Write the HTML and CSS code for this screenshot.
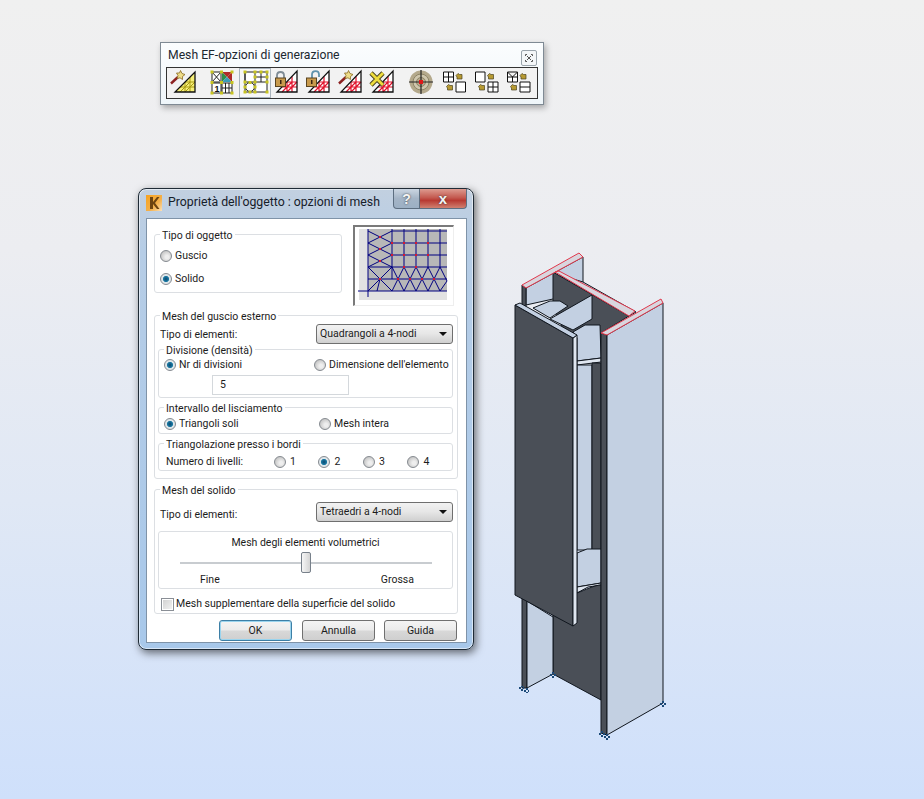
FILE: index.html
```html
<!DOCTYPE html>
<html lang="en">
<head>
  <meta charset="UTF-8" />
  <title>Mesh EF</title>
  <link rel="stylesheet" href="styles.css">
</head>
<body>
  <svg class="defs" width="0" height="0">
    <defs>
      <linearGradient id="logo-bg" x1="0" y1="0" x2="1" y2="1">
        <stop offset="0" stop-color="#f6a21e"/>
        <stop offset=".6" stop-color="#f4b04a"/>
        <stop offset="1" stop-color="#fbe0b8"/>
      </linearGradient>
      <g id="tri-yellow">
        <path d="M28 4V24H8Z" fill="#f6ef7a"/>
        <path d="M18 14V24M23 9V24M13 19H28M18 14H28M18 24L28 14M13 24L23 14" stroke="#a89a10" fill="none"/>
        <path d="M28 4V24H8Z" stroke="#111" stroke-width="1.300" fill="none"/>
      </g>
      <g id="tri-red">
        <path d="M26 3V24H6Z" fill="#fff"/>
        <path d="M16 14V24M21 8.500V24M11 19H26M16 14H26M16 24L26 14M11 24L21 14" stroke="#e0102a" stroke-width="1.200" fill="none"/>
        <path d="M26 3V24H6Z" stroke="#111" stroke-width="1.300" fill="none"/>
      </g>
      <g id="wand">
        <path d="M4 15.500L11 9" stroke="#8c2020" stroke-width="2.400"/>
        <path d="M13.500 2.500L15 5.500L18 6.500L15.500 8.500L15.500 11.500L13 9.800L10 10.500L11 7.500L9.500 5L12.500 5Z" fill="#eedd88" stroke="#8a6a20" stroke-width=".8"/>
      </g>
      <g id="lock">
        <path d="M6 10V7.500C6 2.800 13 2.800 13 7.500V10" stroke="#7f8c96" stroke-width="1.800" fill="none"/>
        <rect x="4.500" y="10" width="10" height="8.500" fill="#c89a4c" stroke="#5a4420"/>
        <rect x="9" y="12" width="1.500" height="4" fill="#3a2410"/>
      </g>
      <g id="unlock">
        <path d="M9 10V6.500C9 2 16 2 16 6.500V9" stroke="#5f93ad" stroke-width="1.800" fill="none"/>
        <rect x="3.500" y="10" width="10" height="8.500" fill="#c89a4c" stroke="#5a4420"/>
        <rect x="8" y="12" width="1.500" height="4" fill="#3a2410"/>
      </g>
      <path id="gold" d="M-3 -1L-1 -3L.5 -2H3V2.500H-2V.5Z" fill="#b79a32" stroke="#4b4420" stroke-width=".7"/>
      <g id="dot"><rect x="-1.500" y="-1.500" width="3" height="3" fill="#c8c420"/></g>
    </defs>
  </svg>

  <section class="toolwin">
    <div class="toolwin-head">
      <span class="toolwin-title">Mesh EF-opzioni di generazione</span>
      <span class="toolwin-close">
        <svg width="8" height="8" viewBox="0 0 8 8"><path d="M2 2L6 6M6 2L2 6M2 .5H.5V2M6 .5H7.500V2M2 7.500H.5V6M6 7.500H7.500V6" stroke="#555" fill="none"/></svg>
      </span>
    </div>
    <div class="toolbar">
      <span class="tool">
        <svg viewBox="0 0 32 29"><use href="#tri-yellow"/><use href="#wand"/></svg>
      </span>
      <span class="tool tool-sep">
        <svg viewBox="0 0 32 29">
          <path d="M5 4H14V14H5ZM5 4L14 14M14 4L5 14" stroke="#222" fill="#fff"/>
          <path d="M15 4H25L20 9Z" fill="#b02a28"/><path d="M15 4V14L20 9Z" fill="#2f8f4a"/><path d="M25 4V14L20 9Z" fill="#b02a28"/><path d="M15 14H25L20 9Z" fill="#3b9db8"/>
          <path d="M5 15H14V25H5Z" stroke="#222" fill="#fff"/>
          <path d="M15 15H25V25H15ZM18.500 15V25M22 15V25M15 20H25" stroke="#222" fill="#fff"/>
          <text class="one" x="7.500" y="24">1</text>
          <use href="#dot" x="5" y="4"/><use href="#dot" x="14.500" y="4"/><use href="#dot" x="25" y="4"/><use href="#dot" x="5" y="14.500"/><use href="#dot" x="14.500" y="14.500"/><use href="#dot" x="25" y="14.500"/><use href="#dot" x="5" y="25"/><use href="#dot" x="14.500" y="25"/><use href="#dot" x="25" y="25"/>
        </svg>
      </span>
      <span class="tool tool-on">
        <svg viewBox="0 0 32 29">
          <path d="M6 4H28V14H6ZM6 24V4M16 4V24M6 24H28V14M22 4V14M16 9H28" stroke="#222" fill="#fff"/>
          <circle cx="11" cy="19" r="4.500" fill="#fff" stroke="#222"/>
          <use href="#dot" x="6" y="4"/><use href="#dot" x="16" y="4"/><use href="#dot" x="22" y="4"/><use href="#dot" x="28" y="4"/><use href="#dot" x="16" y="9"/><use href="#dot" x="28" y="9"/><use href="#dot" x="6" y="14"/><use href="#dot" x="16" y="14"/><use href="#dot" x="28" y="14"/><use href="#dot" x="11" y="14.500"/><use href="#dot" x="6" y="19"/><use href="#dot" x="16" y="19"/><use href="#dot" x="6" y="24"/><use href="#dot" x="11" y="24"/><use href="#dot" x="16" y="24"/><use href="#dot" x="28" y="24"/>
        </svg>
      </span>
      <span class="tool"><svg viewBox="0 0 32 29"><use href="#tri-red"/><use href="#lock"/></svg></span>
      <span class="tool"><svg viewBox="0 0 32 29"><use href="#tri-red"/><use href="#unlock"/></svg></span>
      <span class="tool"><svg viewBox="0 0 32 29"><use href="#tri-red"/><use href="#wand"/></svg></span>
      <span class="tool">
        <svg viewBox="0 0 32 29"><use href="#tri-red"/><path d="M4 5L16 17M16 5L4 17" stroke="#4b4420" stroke-width="4.600"/><path d="M4 5L16 17M16 5L4 17" stroke="#eedc3c" stroke-width="2.800"/></svg>
      </span>
      <span class="tool tool-sep2">
        <svg viewBox="0 0 32 29">
          <circle cx="15" cy="14" r="11.500" fill="#b4a98c"/>
          <circle cx="15" cy="14" r="8" fill="#cfc7ae" stroke="#8e8466"/>
          <circle cx="15" cy="14" r="4.500" fill="#b4a98c" stroke="#8e8466"/>
          <path d="M3 14H27M15 2V26" stroke="#222" stroke-width="1.200"/>
          <rect x="13" y="12" width="4" height="4" fill="#e01818"/>
        </svg>
      </span>
      <span class="tool">
        <svg viewBox="0 0 32 29"><path d="M5.500 4H15.500V14H5.500ZM10.500 4V14M5.500 9H15.500" stroke="#111" fill="#fff"/><path d="M18 14H27.500V24H18Z" stroke="#111" fill="#fff"/><use href="#gold" x="21" y="8.500"/><use href="#gold" x="11.500" y="19.500"/></svg>
      </span>
      <span class="tool">
        <svg viewBox="0 0 32 29"><path d="M5.500 4H15V14H5.500Z" stroke="#111" fill="#fff"/><path d="M18 14H28V24H18ZM23 14V24M18 19H28" stroke="#111" fill="#fff"/><use href="#gold" x="20.500" y="8.500"/><use href="#gold" x="11.500" y="19.500"/></svg>
      </span>
      <span class="tool">
        <svg viewBox="0 0 32 29"><path d="M5.500 4H15.500V14H5.500ZM5.500 9H15.500M10.500 9V14M5.500 4L10.500 9L15.500 4" stroke="#111" fill="#fff"/><path d="M18 14H28V24H18ZM18 19H28" stroke="#111" fill="#fff"/><use href="#gold" x="21" y="8.500"/><use href="#gold" x="11.500" y="19.500"/></svg>
      </span>
    </div>
  </section>

  <section class="dialog">
    <header class="dialog-head">
      <svg class="dialog-logo" width="16" height="16" viewBox="0 0 16 16">
        <rect width="16" height="16" fill="url(#logo-bg)"/>
        <path d="M4 2H7V7L11 2H13.500L9 8L13.500 14H11L7 9V14H4Z" fill="#6e4410"/>
      </svg>
      <span class="dialog-title">Proprietà dell'oggetto : opzioni di mesh</span>
      <span class="btn-help">?</span>
      <span class="btn-close">x</span>
    </header>

    <div class="client">
      <div class="top-row">
        <div class="group group-type">
          <div class="legend">Tipo di oggetto</div>
          <label class="opt opt-type"><i class="radio"></i>Guscio</label>
          <label class="opt opt-type2"><i class="radio radio-on"></i>Solido</label>
        </div>
        <div class="preview">
          <svg width="99" height="81" viewBox="0 0 99 81">
            <rect x="4" y="4" width="88" height="71" fill="#e2e2e2"/>
            <rect x="13" y="4" width="79" height="62" fill="#b8b8b8"/>
            <path d="M13 4V72M37 4V54M49 4V42M61 4V42M73 4V42M85 4V42M37 6H92M37 18H92M37 30H92M13 42H92M13 54H92M3 66H92" stroke="#000080" fill="none"/>
            <path d="M13 6L37 18L13 30L37 42M37 6L13 18L37 30L13 42M13 42L25 54L37 42M25 54L22 66M25 54L13 66M25 54L37 66M37 42L49 66M49 42L37 66M49 42L61 66M61 42L49 66M61 42L73 66M73 42L61 66M73 42L85 66M85 42L73 66M85 42L92 56M92 56L85 66" stroke="#000080" fill="none"/>
            <g fill="#d81830"><rect x="24" y="11" width="2" height="2"/><rect x="24" y="23" width="2" height="2"/><rect x="24" y="35" width="2" height="2"/><rect x="36" y="17" width="2" height="2"/><rect x="48" y="17" width="2" height="2"/><rect x="60" y="17" width="2" height="2"/><rect x="72" y="17" width="2" height="2"/><rect x="36" y="29" width="2" height="2"/><rect x="48" y="29" width="2" height="2"/><rect x="60" y="29" width="2" height="2"/><rect x="72" y="29" width="2" height="2"/><rect x="48" y="41" width="2" height="2"/><rect x="60" y="41" width="2" height="2"/><rect x="24" y="53" width="2" height="2"/><rect x="42" y="53" width="2" height="2"/><rect x="54" y="53" width="2" height="2"/><rect x="66" y="53" width="2" height="2"/><rect x="78" y="53" width="2" height="2"/></g>
          </svg>
        </div>
      </div>

      <div class="group group-shell">
        <div class="legend">Mesh del guscio esterno</div>
        <div class="field-row">
          <span>Tipo di elementi:</span>
          <span class="combo">Quadrangoli a 4-nodi</span>
        </div>
        <div class="group sub sub-div">
          <div class="legend">Divisione (densità)</div>
          <div class="row-div">
            <label class="opt"><i class="radio radio-on"></i>Nr di divisioni</label>
            <label class="opt"><i class="radio"></i>Dimensione dell'elemento</label>
          </div>
          <div class="num-input">5</div>
        </div>
        <div class="group sub sub-smooth">
          <div class="legend">Intervallo del lisciamento</div>
          <div class="row-smooth">
            <label class="opt"><i class="radio radio-on"></i>Triangoli soli</label>
            <label class="opt"><i class="radio"></i>Mesh intera</label>
          </div>
        </div>
        <div class="group sub sub-levels">
          <div class="legend">Triangolazione presso i bordi</div>
          <div class="row-levels">
            <span class="levels-label">Numero di livelli:</span>
            <label class="opt"><i class="radio"></i>1</label>
            <label class="opt"><i class="radio radio-on"></i>2</label>
            <label class="opt"><i class="radio"></i>3</label>
            <label class="opt"><i class="radio"></i>4</label>
          </div>
        </div>
      </div>

      <div class="group group-solid">
        <div class="legend">Mesh del solido</div>
        <div class="field-row field-row-solid">
          <span>Tipo di elementi:</span>
          <span class="combo">Tetraedri a 4-nodi</span>
        </div>
        <div class="group sub sub-vol">
          <div class="vol-title">Mesh degli elementi volumetrici</div>
          <div class="slider"><i class="thumb"></i></div>
          <div class="vol-ends"><span>Fine</span><span>Grossa</span></div>
        </div>
        <label class="opt opt-check"><i class="check"></i>Mesh supplementare della superficie del solido</label>
      </div>

      <div class="buttons">
        <span class="btn btn-default">OK</span>
        <span class="btn">Annulla</span>
        <span class="btn btn-last">Guida</span>
      </div>
    </div>
  </section>

  <svg class="model" width="924" height="799" viewBox="0 0 924 799">
    <g stroke="#10161e" stroke-linejoin="round">
      <!-- back flange and web, top -->
      <path d="M583 257V282L553 299L526 305V288Z" fill="#c3d0e2"/>
      <path d="M522 285L526 288V308H522Z" fill="#4a4f57"/>
      <path d="M553 272L629 316L601 333L601 360H577L553 306Z" fill="#4a4f57"/>
      <path d="M583 282L636 312L629 316L560 275Z" fill="#c3d0e2"/>
      <!-- stiffener plates at the top -->
      <path d="M533 308L550 301H560L568 306L550 318Z" fill="#c3d0e2"/>
      <path d="M550 319L592 295V319L573 330Z" fill="#c3d0e2"/>
      <path d="M573 332L585 325H600L601 358L577 361V338Z" fill="#c3d0e2"/>
      <path d="M577 361L601 358V362L577 365Z" fill="#dfe6f0"/>
      <!-- inner web -->
      <path d="M577 365H592V550H577Z" fill="#c3d0e2"/>
      <path d="M592 363H601V550H592Z" fill="#4a4f57"/>
      <path d="M577 553L587 549H601V583L577 587Z" fill="#c3d0e2"/>
      <path d="M577 587L601 583V585L588 587L577 593Z" fill="#dfe6f0"/>
      <path d="M577 593C585 590 595 585 601 585V700L553 674V610Z" fill="#4a4f57"/>
      <!-- back flange, bottom -->
      <path d="M522 598H527V688L522 688Z" fill="#4a4f57"/>
      <path d="M527 601L553 617V674L527 688Z" fill="#c3d0e2"/>
      <!-- right flange -->
      <path d="M601 333L607 335V735L601 733Z" fill="#4a4f57"/>
      <path d="M607 335L663 303V703L607 735Z" fill="#c3d0e2"/>
      <!-- front flange -->
      <path d="M515 305V595L573 626V338Z" fill="#4a4f57"/>
      <path d="M573 338L577 335V623L573 626Z" fill="#dfe6f0"/>
      <path d="M515 305L520 303L577 335L573 338Z" fill="#c3d0e2"/>
    </g>
    <g stroke="#e0384c" stroke-linejoin="round" fill="#d9d6de">
      <path d="M522 285L579 253L583 257L526 288Z"/>
      <path d="M601 333L661 299L663 303L607 335Z"/>
      <path d="M555 272L559 271L635 311L629 316Z"/>
    </g>
    <g fill="#1c4a78">
      <path d="M519 687H524V689H519ZM521 686V691H523V686ZM524 690H529V692H524ZM526 688V693H528V688Z"/>
      <path d="M550 674H556V676H550ZM552 672V678H554V672Z"/>
      <path d="M599 733H605V735H599ZM601 731V737H603V731ZM604 736H610V738H604ZM606 734V740H608V734Z"/>
      <path d="M660 703H666V705H660ZM662 701V707H664V701Z"/>
    </g>
  </svg>
</body>
</html>
```

FILE: styles.css
```css
* {
  box-sizing: border-box;
}
html, body {
  height: 100%;
}
body {
  margin: 0;
  overflow: hidden;
  position: relative;
  background: linear-gradient(#f0f0f0 0, #ecedf1 250px, #e0e8f5 500px, #cfe0fb 799px);
  color: #1c1c1c;
  font-family: Roboto, "Noto Sans", sans-serif;
  font-size: 10.500px;
}
.defs {
  position: absolute;
}

/* floating toolbar window */
.toolwin {
  position: absolute;
  left: 160px;
  top: 42px;
  width: 384px;
  height: 63px;
  padding: 0 5px;
  background: linear-gradient(#fbfdfe, #eff6fa);
  border: 1px solid #7f8a94;
  box-shadow: 2px 3px 6px rgba(0, 0, 0, 0.3);
}
.toolwin-head {
  display: flex;
  justify-content: space-between;
  align-items: center;
  height: 24px;
  padding: 0 1px 0 2px;
}
.toolwin-title {
  margin-top: -1px;
  font-size: 12.200px;
  color: #1c2830;
}
.toolwin-close {
  display: flex;
  align-items: center;
  justify-content: center;
  width: 16px;
  height: 16px;
  margin-top: 5px;
  background: #f3f6f8;
  border: 1px solid #9aa4ac;
  border-radius: 2px;
}
.toolbar {
  display: flex;
  width: 372px;
  height: 32px;
  background: #f2f2f2;
  border: 1px solid #333;
}
.tool {
  width: 32px;
  height: 30px;
}
.tool svg {
  display: block;
  width: 32px;
  height: 29px;
}
.tool-sep {
  margin-left: 8px;
}
.tool-sep2 {
  margin-left: 7px;
}
.tool-on {
  background: #f7f7f7;
  box-shadow: inset 0 0 0 1px #aab4bc;
}

/* dialog window */
.dialog {
  position: absolute;
  left: 138px;
  top: 188px;
  width: 336px;
  height: 462px;
  padding: 0 6px 7px 7px;
  background: linear-gradient(#c2d0e0 0, #b6cde6 60px, #a8c8ea 100%);
  border: 1px solid #1f2b36;
  border-radius: 8px;
  box-shadow: 2px 3px 9px rgba(0, 0, 0, 0.55), inset 0 0 0 1px rgba(255, 255, 255, 0.55);
}
.dialog-head {
  display: flex;
  height: 29px;
}
.dialog-logo {
  margin: 6px 6px 0 0;
}
.dialog-title {
  flex: 1;
  margin-top: 6px;
  font-size: 12.300px;
  white-space: nowrap;
  color: #16202a;
}
.btn-help, .btn-close {
  display: flex;
  align-items: center;
  justify-content: center;
  height: 20px;
  border: 1px solid #5d6e80;
  border-top: 0;
  color: #f4f4f4;
  font-family: "Liberation Sans", sans-serif;
  font-weight: bold;
  text-shadow: 0 0 2px #333;
}
.btn-help {
  width: 27px;
  font-size: 14px;
  background: linear-gradient(#cbd6e2, #a4b4c6 50%, #9cb0c4);
  border-radius: 0 0 0 4px;
}
.btn-close {
  width: 47px;
  font-size: 15px;
  background: linear-gradient(#dd9b90, #c45a50 45%, #b83a32 60%, #d08070);
  border-left: 0;
  border-radius: 0 0 4px 0;
}
.client {
  height: 425px;
  padding: 6px 8px 0 7px;
  background: #fff;
  border: 1px solid #7f93a8;
}

/* groups */
.group {
  border: 1px solid #dcdfe3;
  border-radius: 3px;
}
.legend {
  width: fit-content;
  margin: -6px 0 -2px 5px;
  padding: 0 2px;
  background: #fff;
  line-height: 14px;
}
.group-shell > .legend, .group-solid > .legend {
  margin-left: 2px;
}
.top-row {
  display: flex;
  gap: 11px;
  height: 81px;
}
.group-type {
  width: 188px;
  height: 59px;
  margin-top: 9px;
}
.preview {
  width: 101px;
  height: 81px;
  background: #fff;
  border: 1px solid #eee;
  border-top: 2px solid #7a7a7a;
  border-left: 2px solid #7a7a7a;
}
.preview svg {
  display: block;
  margin-top: -2px;
}
.opt {
  display: flex;
  align-items: center;
  gap: 3px;
  line-height: 14px;
  white-space: nowrap;
}
.opt-type {
  margin: 8px 0 0 5px;
}
.opt-type2 {
  margin: 9px 0 0 5px;
}
.radio {
  width: 12px;
  height: 12px;
  flex: none;
  border: 1px solid #858a90;
  border-radius: 50%;
  background: radial-gradient(circle at 60% 60%, #eeeeee 20%, #bdbdbd 85%);
}
.radio-on {
  background: radial-gradient(circle, #0c4870 0, #1b7aa4 38%, #dfe6ea 50%);
}
.check {
  width: 13px;
  height: 13px;
  flex: none;
  border: 1px solid #8a8f96;
  background: linear-gradient(135deg, #cfcfcf, #f4f4f4);
  box-shadow: inset 0 0 0 1px #fff;
}

.group-shell {
  height: 164px;
  margin-top: 9px;
  padding: 0 4px 0 3px;
}
.field-row {
  display: flex;
  justify-content: space-between;
  align-items: center;
  height: 20px;
  margin-top: 2px;
  padding-left: 2px;
}
.field-row span:first-child {
  padding-top: 1px;
}
.combo {
  position: relative;
  width: 137px;
  height: 20px;
  padding: 2px 3px;
  background: linear-gradient(#f2f2f2 0, #e6e6e6 50%, #cfcfcf 100%);
  border: 1px solid #6f6f6f;
  border-radius: 3px;
}
.combo::after {
  content: "";
  position: absolute;
  right: 5px;
  top: 7px;
  border: 4px solid transparent;
  border-top: 4px solid #111;
  border-bottom: 0;
}
.sub-div {
  height: 49px;
  margin-top: 5px;
}
.row-div {
  display: flex;
  margin: 2px 0 0 5px;
}
.row-div .opt:first-child {
  width: 150px;
}
.num-input {
  width: 137px;
  height: 20px;
  margin: 3px 0 0 53px;
  padding: 2px 7px;
  border: 1px solid #d4d8dc;
}
.sub-smooth {
  height: 27px;
  margin-top: 9px;
}
.row-smooth {
  display: flex;
  margin: 3px 0 0 5px;
}
.row-smooth .opt:first-child {
  width: 155px;
}
.sub-levels {
  height: 28px;
  margin-top: 9px;
}
.row-levels {
  display: flex;
  margin: 3px 0 0 7px;
}
.levels-label {
  width: 109px;
  padding-top: 1px;
  line-height: 16px;
}
.row-levels .opt {
  width: 45px;
  gap: 4px;
}

.group-solid {
  height: 125px;
  margin-top: 10px;
  padding: 0 4px 0 3px;
}
.field-row-solid {
  margin-top: 6px;
}
.field-row-solid span:first-child {
  padding-top: 4px;
}
.sub-vol {
  height: 58px;
  margin-top: 9px;
  padding-top: 3px;
}
.vol-title {
  text-align: center;
  line-height: 15px;
}
.slider {
  position: relative;
  height: 2px;
  margin: 12px 20px 0 21px;
  background: #c8ccd0;
}
.thumb {
  position: absolute;
  left: 121px;
  top: -10px;
  width: 10px;
  height: 21px;
  background: linear-gradient(90deg, #f6f6f6, #d4d4d4);
  border: 1px solid #77808a;
  border-radius: 2px;
}
.vol-ends {
  display: flex;
  justify-content: space-between;
  margin-top: 9px;
  padding: 0 38px 0 41px;
  line-height: 14px;
}
.opt-check {
  gap: 2px;
  margin: 8px 0 0 3px;
}

.buttons {
  display: flex;
  justify-content: flex-end;
  gap: 10px;
  margin: 6px 1px 0 0;
}
.btn {
  width: 73px;
  height: 21px;
  text-align: center;
  line-height: 19px;
  background: linear-gradient(#f4f4f4 0, #ebebeb 48%, #d8d8d8 52%, #cfcfcf 100%);
  border: 1px solid #707070;
  border-radius: 3px;
}
.btn-default {
  border-color: #3d7fa6;
  box-shadow: inset 0 0 0 1px #9ad4ee;
}
.btn-last {
  margin-left: -1px;
}

/* the beam drawn on the free canvas */
.model {
  position: absolute;
  left: 0;
  top: 0;
  pointer-events: none;
}
.one {
  font-size: 9px;
  font-family: "Liberation Sans", sans-serif;
  font-weight: bold;
  fill: #111;
}
```
